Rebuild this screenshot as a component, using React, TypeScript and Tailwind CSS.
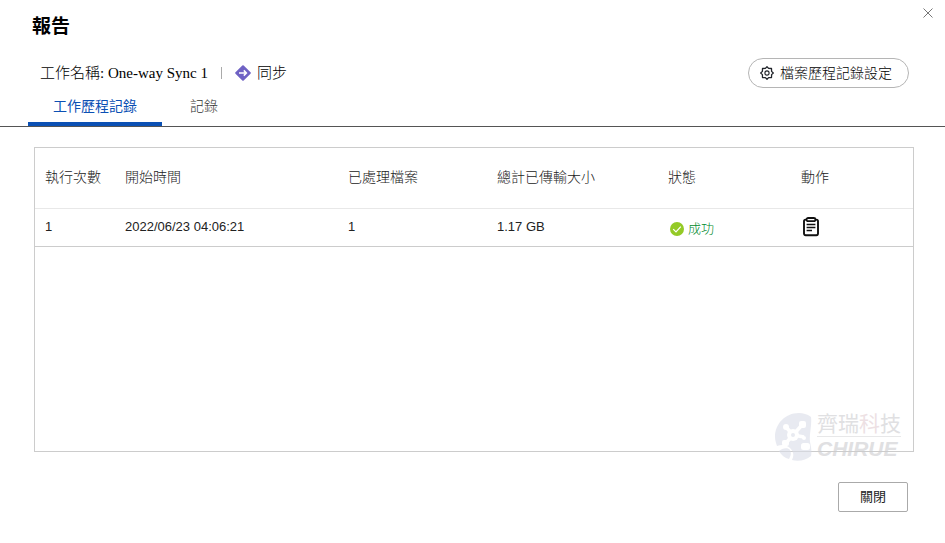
import React, { useState } from "react";

interface HistoryRow {
    id: number;
    startTime: string;
    files: number;
    size: string;
    status: string;
}

const columns = [
    { title: "執行次數", width: "w-20" },
    { title: "開始時間", width: "w-[223px]" },
    { title: "已處理檔案", width: "w-[149px]" },
    { title: "總計已傳輸大小", width: "w-[171px]" },
    { title: "狀態", width: "w-[133px]" },
    { title: "動作", width: "" },
];

const rows: HistoryRow[] = [
    { id: 1, startTime: "2022/06/23 04:06:21", files: 1, size: "1.17 GB", status: "成功" },
];

const CloseIcon = () => (
    <svg viewBox="0 0 10 10" className="size-[10px]" fill="none" stroke="#777" strokeWidth="1">
        <path d="M0.5 0.5 9.5 9.5M9.5 0.5 0.5 9.5" />
    </svg>
);

const SyncIcon = () => (
    <svg viewBox="0 0 16 16" className="size-4">
        <path d="M8 1.2 14.8 8 8 14.8 1.2 8Z" fill="#6f62c4" stroke="#6f62c4" strokeWidth="2" strokeLinejoin="round" />
        <path d="M4 8h7M8.8 5.4 11.4 8 8.8 10.6" fill="none" stroke="#fff" strokeWidth="1.5" />
    </svg>
);

const GearIcon = () => (
    <svg viewBox="0 0 14 14" className="size-[14px]" fill="none" stroke="#22252b" strokeWidth="1.3" strokeLinejoin="round">
        <path d="M5.4 2.4 7 .7l1.6 1.7 2.9.1.1 2.9L13.3 7l-1.7 1.6-.1 2.9-2.9.1L7 13.3l-1.6-1.7-2.9-.1-.1-2.9L.7 7l1.7-1.6.1-2.9Z" />
        <circle cx="7" cy="7" r="2.1" strokeWidth="1.1" />
    </svg>
);

const SuccessIcon = () => (
    <svg viewBox="0 0 14 14" className="size-[14px]">
        <circle cx="7" cy="7" r="7" fill="#94ca26" />
        <path d="M3.2 7.2 6 10 10.8 4.6" fill="none" stroke="#fff" strokeWidth="1.2" />
    </svg>
);

const ReportIcon = () => (
    <svg viewBox="0 0 16 20" className="h-5 w-4" fill="none" stroke="#111">
        <rect x="1" y="2.6" width="14" height="15.6" rx="1.6" strokeWidth="1.9" />
        <rect x="3.6" y="1" width="8.8" height="3.2" rx="1.5" fill="#fff" strokeWidth="1.8" />
        <path d="M3.6 7.5h8.8M3.6 10.5h8.8M3.6 13.5h5.4" strokeWidth="1.4" />
    </svg>
);

const Watermark = () => (
    <div className="pointer-events-none absolute right-3 -bottom-[10px] flex items-center gap-1 opacity-60">
        <svg viewBox="0 0 38 48" className="h-12 w-[38px]">
            <path d="M36 4C32 1 28 0 24 0 10 0 0 11 0 24c0 3 1 6 2 9 5-2 10-1 13 2 4 4 4 8 2 12 7 2 14 0 19-4 1-5 0-9-1-14-1-8 2-16 1-25Z" fill="#dadde8" />
            <path d="M4 38c3-3 9-4 11-1 2 4 0 7-1 9-4-1-8-4-10-8Z" fill="#dadde8" />
            <g stroke="#fff" strokeWidth="3.6">
                <path d="M18 22 27 12M18 22 11 14M18 22 11 30M18 22 29 24" />
            </g>
            <g fill="#fff">
                <circle cx="18" cy="22" r="6" />
                <rect x="24" y="8" width="7" height="7" rx="2" />
                <circle cx="11" cy="14" r="3" />
                <rect x="7" y="27" width="7" height="6" rx="2" />
                <circle cx="29" cy="25" r="2" />
                <rect x="26" y="30" width="9" height="7" rx="2.5" />
            </g>
            <circle cx="18" cy="22" r="2" fill="#dadde8" />
        </svg>
        <div className="text-[21px] leading-6 text-[#cccccf]">
            <p className="border-b border-[#d9d9dc]">
                齊瑞<span className="text-[#e2cdd2]">科</span>技
            </p>
            <p className="font-bold italic">CHIRUE</p>
        </div>
    </div>
);

const App = () => {
    const [activeTab, setActiveTab] = useState("工作歷程記錄");

    return (
        <div className="relative bg-white pb-7 font-['Liberation_Sans','Noto_Sans_CJK_TC',sans-serif] text-[#222]">
            <button type="button" aria-label="關閉" className="absolute top-2 right-3">
                <CloseIcon />
            </button>
            <h1 className="px-8 pt-[13px] text-[19px] leading-7 font-bold text-black">報告</h1>

            <div className="mt-[17px] flex items-center justify-between pr-9 pl-10">
                <div className="flex items-center font-['Liberation_Serif','Noto_Sans_CJK_TC',serif] text-[15px] leading-6 font-light text-black">
                    <p>工作名稱: One-way Sync 1</p>
                    <span className="mx-[13px] h-3 w-px bg-[#aaa]"></span>
                    <span className="flex items-center gap-1.5">
                        <SyncIcon />
                        同步
                    </span>
                </div>
                <button type="button" className="flex h-[30px] items-center gap-1.5 rounded-full border border-[#b5b5b5] pr-4 pl-[11px] text-[14px] font-light text-black">
                    <GearIcon />
                    檔案歷程記錄設定
                </button>
            </div>

            <div className="flex border-b border-[#555] pl-7 text-[14px]">
                {["工作歷程記錄", "記錄"].map((tab) => (
                    <button
                        key={tab}
                        type="button"
                        onClick={() => setActiveTab(tab)}
                        className={
                            activeTab === tab
                                ? "h-[38px] border-b-4 border-[#0b50b4] px-[25px] pt-0.5 text-[#0b50b4]"
                                : "h-[38px] border-b-4 border-transparent px-7 pt-0.5 font-light text-[#333]"
                        }
                    >
                        {tab}
                    </button>
                ))}
            </div>

            <div className="relative mt-5 mr-[31px] ml-[34px] min-h-[305px] border border-[#ccc]">
                <table className="w-full table-fixed border-collapse text-left">
                    <thead>
                        <tr className="h-[60px] border-b border-[#e8e8e8] text-[14px] text-[#222]">
                            {columns.map((column) => (
                                <th key={column.title} className={`${column.width} pl-[10px] font-light whitespace-nowrap`}>
                                    {column.title}
                                </th>
                            ))}
                        </tr>
                    </thead>
                    <tbody>
                        {rows.map((row) => (
                            <tr key={row.id} className="h-[38px] border-b border-[#ccc] text-[13px]">
                                <td className="pl-[10px]">{row.id}</td>
                                <td className="pl-[10px]">{row.startTime}</td>
                                <td className="pl-[10px]">{row.files}</td>
                                <td className="pl-[10px]">{row.size}</td>
                                <td className="pl-3">
                                    <span className="flex items-center gap-1 pt-1 font-light text-[#008a2b]">
                                        <SuccessIcon />
                                        {row.status}
                                    </span>
                                </td>
                                <td className="pl-3">
                                    <button type="button" aria-label="記錄" className="block">
                                        <ReportIcon />
                                    </button>
                                </td>
                            </tr>
                        ))}
                    </tbody>
                </table>
                <Watermark />
            </div>

            <div className="mt-[30px] flex justify-end pr-[37px]">
                <button type="button" className="h-[30px] w-[70px] rounded-xs border border-[#aaa] text-[13px]">
                    關閉
                </button>
            </div>
        </div>
    );
};

export default App;
